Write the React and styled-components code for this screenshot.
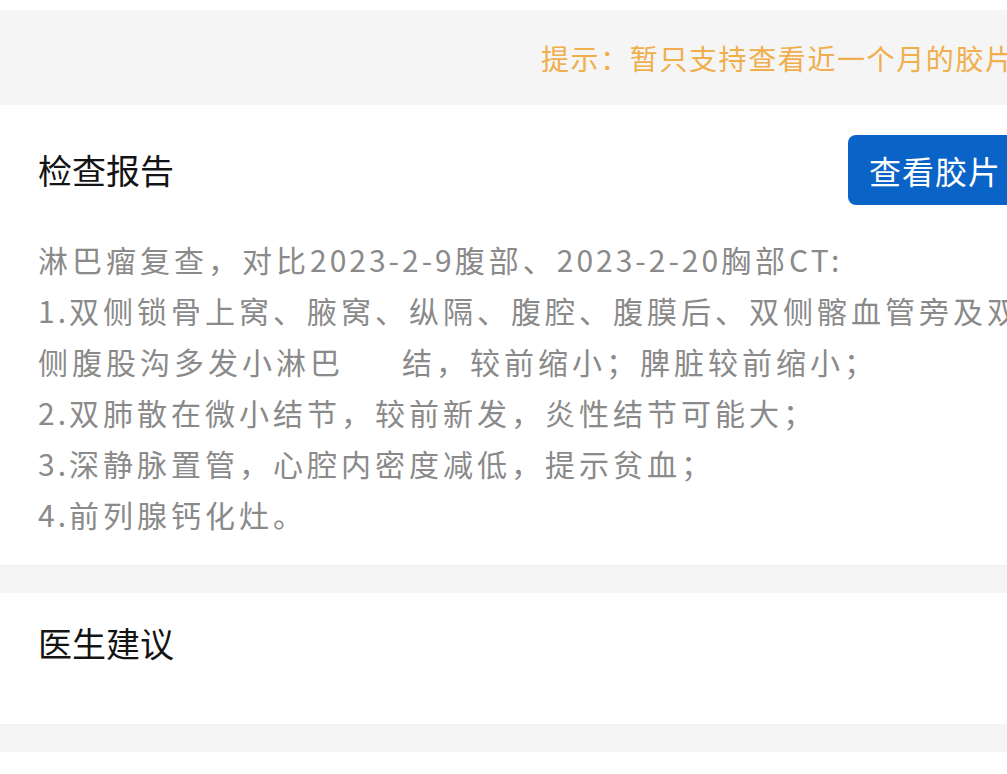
import React from "react";
import styled, { createGlobalStyle } from "styled-components";

const GlobalStyle = createGlobalStyle`
  body {
    margin: 0;
    background: #ffffff;
    overflow: hidden;
    font-family: "Noto Sans CJK SC", "Noto Sans", sans-serif;
  }
`;

const Screen = styled.div`
  width: 1060px;
  display: flex;
  flex-direction: column;
  background: #ffffff;
`;

const TopStrip = styled.div`
  height: 10px;
  background: #ffffff;
`;

const Band = styled.div`
  height: ${(p) => p.h}px;
  background: #f5f5f5;
  box-shadow: inset 0 2px 3px rgba(0, 0, 0, 0.015);
`;

const HintBar = styled.div`
  height: 95px;
  background: #f5f5f5;
  display: flex;
  align-items: center;
  padding-left: 541px;
`;

const Hint = styled.span`
  font-size: 28px;
  letter-spacing: 1.6px;
  color: #f0ae4c;
  white-space: nowrap;
`;

const Card = styled.section`
  background: #ffffff;
  padding: 30px 38px ${(p) => p.bottom}px;
  min-height: ${(p) => p.minH || 0}px;
  box-sizing: border-box;
`;

const Header = styled.div`
  display: flex;
  align-items: center;
  justify-content: space-between;
  height: 70px;
`;

const Title = styled.h2`
  margin: 0;
  font-size: 34px;
  font-weight: 400;
  line-height: 40px;
  color: #141414;
`;

const FilmButton = styled.button`
  height: 70px;
  padding: 0 21px;
  border: none;
  border-radius: 8px;
  background: #0a63c6;
  color: #ffffff;
  font-family: inherit;
  font-size: 32px;
  letter-spacing: 1px;
  white-space: nowrap;
`;

const Report = styled.div`
  margin-top: 29px;
  font-size: 30px;
  line-height: 51px;
  letter-spacing: 4px;
  color: #8a8a8a;
`;

const Line = styled.div`
  white-space: nowrap;
`;

// digits in the report sit a bit tighter than the ideographs
const Num = styled.span`
  letter-spacing: 3px;
`;

const Gap = styled.span`
  display: inline-block;
  width: 58px;
`;

export default function App() {
  return (
    <>
      <GlobalStyle />
      <Screen>
        <TopStrip />
        <HintBar>
          <Hint>提示：暂只支持查看近一个月的胶片</Hint>
        </HintBar>
        <Card bottom={25}>
          <Header>
            <Title>检查报告</Title>
            <FilmButton>查看胶片</FilmButton>
          </Header>
          <Report>
            <Line>
              淋巴瘤复查，对比<Num>2023-2-9</Num>腹部、<Num>2023-2-20</Num>胸部
              <Num>CT:</Num>
            </Line>
            <Line>
              <Num>1.</Num>双侧锁骨上窝、腋窝、纵隔、腹腔、腹膜后、双侧髂血管旁及双
            </Line>
            <Line>
              侧腹股沟多发小淋巴<Gap />结，较前缩小；脾脏较前缩小；
            </Line>
            <Line>
              <Num>2.</Num>双肺散在微小结节，较前新发，炎性结节可能大；
            </Line>
            <Line>
              <Num>3.</Num>深静脉置管，心腔内密度减低，提示贫血；
            </Line>
            <Line>
              <Num>4.</Num>前列腺钙化灶。
            </Line>
          </Report>
        </Card>
        <Band h={28} />
        <Card bottom={0} minH={131}>
          <Title>医生建议</Title>
        </Card>
        <Band h={28} />
        <TopStrip />
      </Screen>
    </>
  );
}
